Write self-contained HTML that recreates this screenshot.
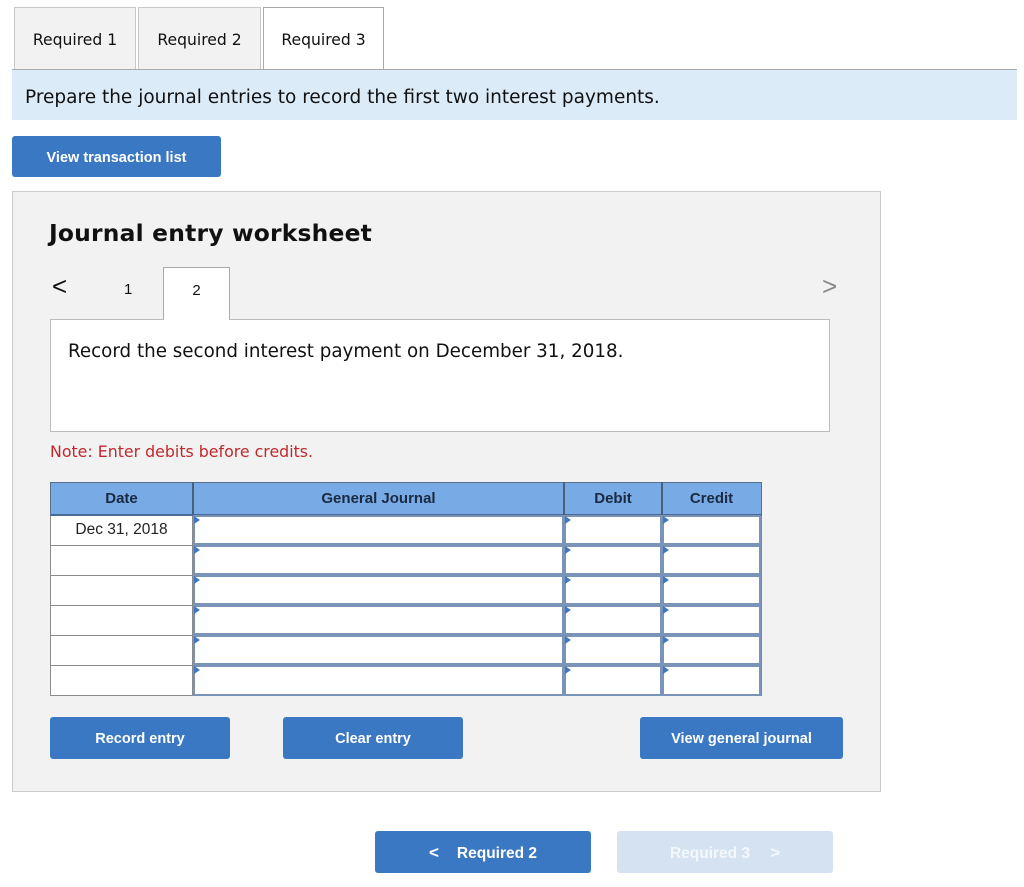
<!DOCTYPE html>
<html><head><meta charset="utf-8"><style>
*{box-sizing:border-box;margin:0;padding:0}
body{width:1024px;height:887px;background:#fff;position:relative;font-family:"DejaVu Sans",Verdana,sans-serif;overflow:hidden;color:#111}
.a{position:absolute}
.tab{position:absolute;top:7px;height:63px;border:1px solid #c8c8c8;border-bottom:none;background:#f2f2f2;font-size:15.6px;text-align:center;line-height:64px}
.btn{position:absolute;background:#3a78c3;color:#fff;font-family:"Liberation Sans",Arial,sans-serif;font-weight:bold;font-size:15px;text-align:center;border-radius:3px}
.cell{position:absolute;background:#fff}
.inp{position:absolute;background:#fff;border:2px solid #7a93b8}
.inp:before{content:"";position:absolute;left:-1px;top:-1px;border-left:6px solid #3f78c2;border-top:4px solid transparent;border-bottom:4px solid transparent}
</style></head><body>
<div class="tab" style="left:14px;width:122px">Required 1</div>
<div class="tab" style="left:138px;width:123px">Required 2</div>
<div class="tab" style="left:263px;width:121px;background:#fff;height:64px;border-color:#aaa">Required 3</div>
<div class="a" style="left:12px;top:69px;width:1005px;height:1px;background:#aaa"></div>
<div class="a" style="left:12px;top:70px;width:1005px;height:50px;background:#dcebf8;font-size:18.5px;line-height:55px;padding-left:13px;white-space:nowrap">Prepare the journal entries to record the first two interest payments.</div>
<div class="btn" style="left:12px;top:136px;width:209px;height:41px;line-height:44px;font-size:14.5px">View transaction list</div>

<div class="a" style="left:12px;top:191px;width:869px;height:601px;background:#f2f2f2;border:1px solid #ccc"></div>
<div class="a" style="left:49px;top:219px;font-size:23.4px;font-weight:bold;letter-spacing:0.2px;white-space:nowrap">Journal entry worksheet</div>
<div class="a" style="left:52px;top:272px;font-size:26px;font-family:'Liberation Sans',sans-serif;line-height:28px">&lt;</div>
<div class="a" style="left:124px;top:281px;font-size:15px;font-family:'Liberation Sans',sans-serif">1</div>
<div class="a" style="left:163px;top:267px;width:67px;height:54px;background:#fff;border:1px solid #aaa;border-bottom:none;text-align:center;font-family:'Liberation Sans',sans-serif;font-size:15px;line-height:46px">2</div>
<div class="a" style="left:822px;top:272px;font-size:26px;font-family:'Liberation Sans',sans-serif;color:#888;line-height:28px">&gt;</div>
<div class="a" style="left:50px;top:319px;width:780px;height:113px;background:#fff;border:1px solid #bbb;font-size:18.3px;padding:21px 0 0 17px;white-space:nowrap">Record the second interest payment on December 31, 2018.</div>
<div class="a" style="left:164px;top:319px;width:65px;height:2px;background:#fff"></div>
<div class="a" style="left:50px;top:442px;font-size:15.8px;color:#c0282d;white-space:nowrap">Note: Enter debits before credits.</div>

<div class="a" style="left:50px;top:482px;width:712px;height:214px;background:#8a8a8a"></div>
<div class="a" style="left:51px;top:483px;width:710px;height:31px;background:#78abe6"></div>
<div class="a" style="left:50px;top:482px;width:712px;height:34px;border:1px solid #5a6f8a;border-bottom:2px solid #4a6a95"></div>
<div class="a" style="left:192px;top:482px;width:2px;height:33px;background:#4a5f7a"></div>
<div class="a" style="left:563px;top:482px;width:2px;height:33px;background:#4a5f7a"></div>
<div class="a" style="left:661px;top:482px;width:2px;height:33px;background:#4a5f7a"></div>
<div class="a" style="left:51px;top:490px;width:141px;text-align:center;font:bold 15px 'Liberation Sans',sans-serif;color:#1a2a40">Date</div>
<div class="a" style="left:194px;top:490px;width:369px;text-align:center;font:bold 15px 'Liberation Sans',sans-serif;color:#1a2a40">General Journal</div>
<div class="a" style="left:565px;top:490px;width:96px;text-align:center;font:bold 15px 'Liberation Sans',sans-serif;color:#1a2a40">Debit</div>
<div class="a" style="left:663px;top:490px;width:97px;text-align:center;font:bold 15px 'Liberation Sans',sans-serif;color:#1a2a40">Credit</div>

<div class="cell" style="left:51px;top:516px;width:141px;height:29px;font:15.5px 'Liberation Sans',sans-serif;text-align:center;line-height:27px;color:#222">Dec 31, 2018</div>
<div class="cell" style="left:51px;top:546px;width:141px;height:29px"></div>
<div class="cell" style="left:51px;top:576px;width:141px;height:29px"></div>
<div class="cell" style="left:51px;top:606px;width:141px;height:29px"></div>
<div class="cell" style="left:51px;top:636px;width:141px;height:29px"></div>
<div class="cell" style="left:51px;top:666px;width:141px;height:29px"></div>

<div class="inp" style="left:193px;top:515px;width:371px;height:30px"></div><div class="inp" style="left:564px;top:515px;width:98px;height:30px"></div><div class="inp" style="left:662px;top:515px;width:99px;height:30px"></div>
<div class="inp" style="left:193px;top:545px;width:371px;height:30px"></div><div class="inp" style="left:564px;top:545px;width:98px;height:30px"></div><div class="inp" style="left:662px;top:545px;width:99px;height:30px"></div>
<div class="inp" style="left:193px;top:575px;width:371px;height:30px"></div><div class="inp" style="left:564px;top:575px;width:98px;height:30px"></div><div class="inp" style="left:662px;top:575px;width:99px;height:30px"></div>
<div class="inp" style="left:193px;top:605px;width:371px;height:30px"></div><div class="inp" style="left:564px;top:605px;width:98px;height:30px"></div><div class="inp" style="left:662px;top:605px;width:99px;height:30px"></div>
<div class="inp" style="left:193px;top:635px;width:371px;height:30px"></div><div class="inp" style="left:564px;top:635px;width:98px;height:30px"></div><div class="inp" style="left:662px;top:635px;width:99px;height:30px"></div>
<div class="inp" style="left:193px;top:665px;width:371px;height:31px"></div><div class="inp" style="left:564px;top:665px;width:98px;height:31px"></div><div class="inp" style="left:662px;top:665px;width:99px;height:31px"></div>

<div class="btn" style="left:50px;top:717px;width:180px;height:42px;line-height:45px;font-size:14.5px">Record entry</div>
<div class="btn" style="left:283px;top:717px;width:180px;height:42px;line-height:45px;font-size:14.5px">Clear entry</div>
<div class="btn" style="left:640px;top:717px;width:203px;height:42px;line-height:45px;font-size:14.5px">View general journal</div>

<div class="btn" style="left:375px;top:831px;width:216px;height:42px;line-height:43px;font-size:15.5px"><span style="margin-right:18px;font-size:17px">&lt;</span>Required 2</div>
<div class="btn" style="left:617px;top:831px;width:216px;height:42px;line-height:43px;font-size:15.5px;background:#d5e2f2;color:#f4f8fc">Required 3<span style="margin-left:20px;font-size:17px">&gt;</span></div>
</body></html>
